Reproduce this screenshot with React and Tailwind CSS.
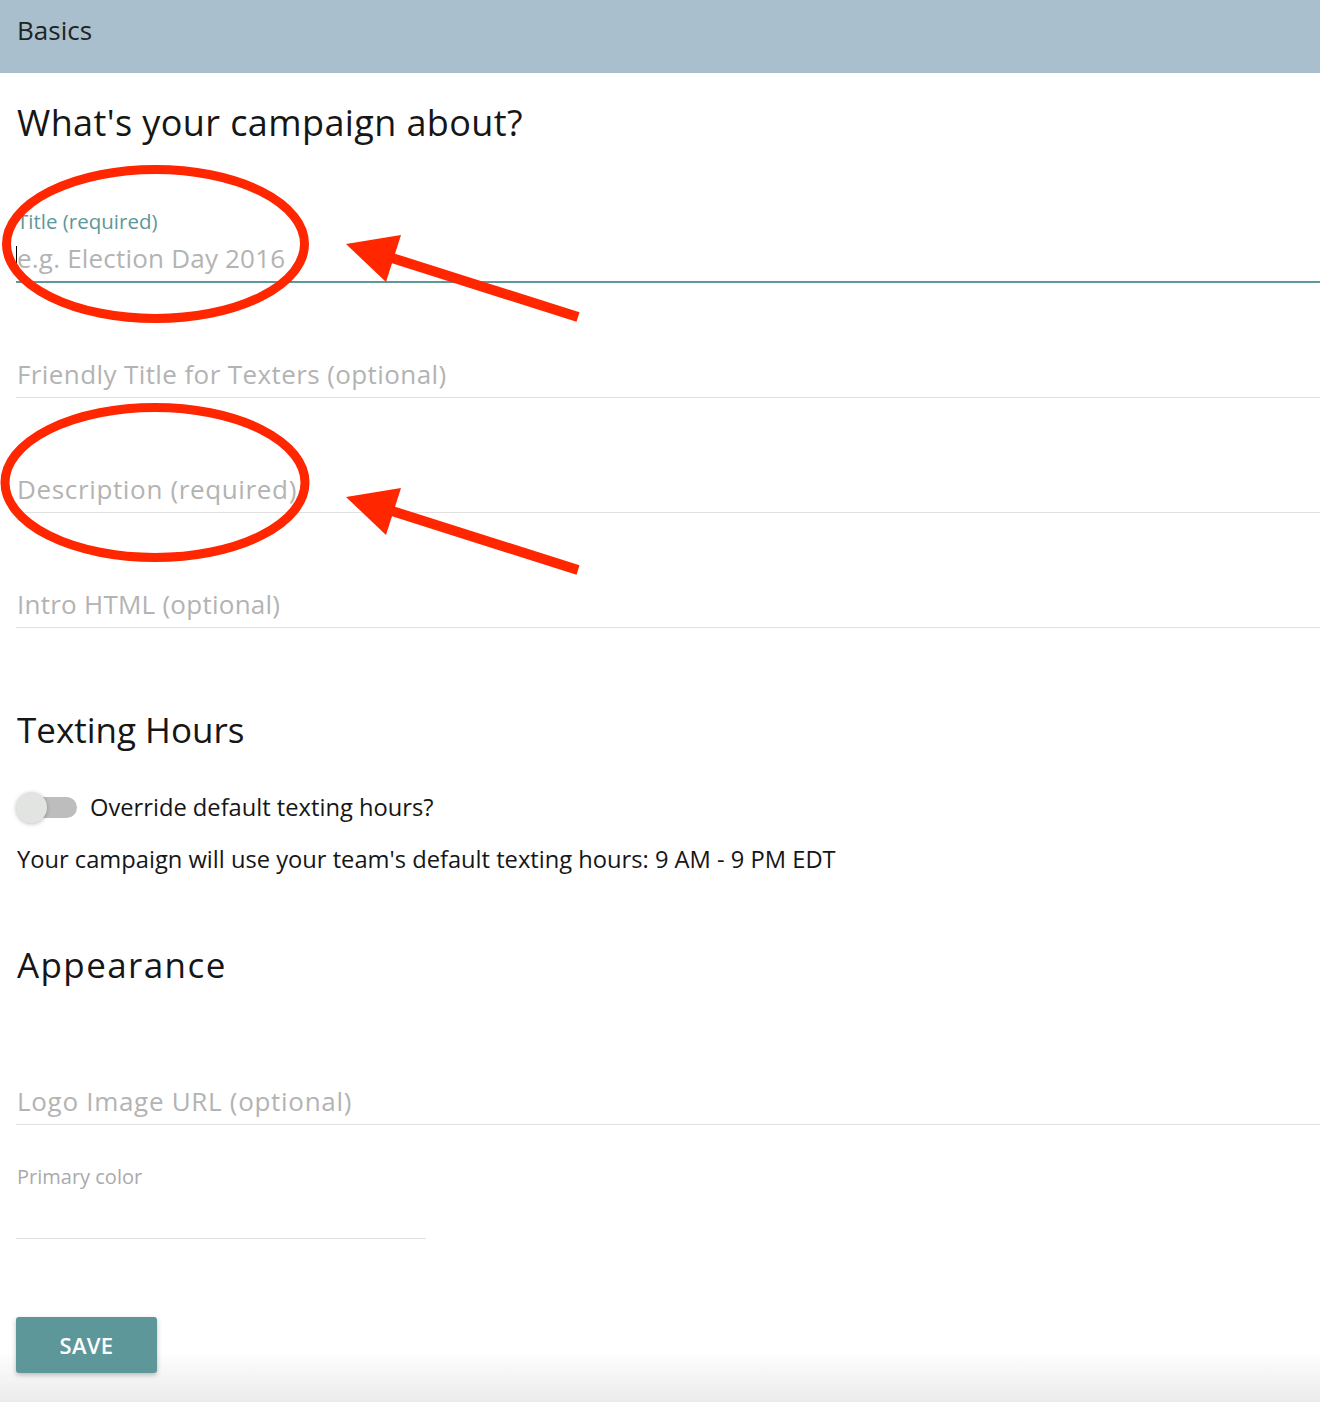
export default function App() {
  return (
    <div className="relative min-h-[1402px] overflow-hidden bg-[linear-gradient(to_bottom,#ffffff_1350px,#ebebeb_1402px)] font-['Open_Sans',sans-serif] text-[#161616]">
      <div className="h-[73px] bg-[#a9bfcd] px-[17px] pt-[15px] text-[26px] leading-[30px] text-[#222]">Basics</div>
      <div className="pl-4">
        <h1 className="mt-[30px] pl-px text-[36px] leading-[40px] tracking-[0.4px]">What's your campaign about?</h1>

        <div className="mt-[68px] border-b-2 border-[#5e9799] pb-[8px]">
          <div className="pl-px text-[20.5px] leading-[20px] text-[#5e9799]">Title (required)</div>
          <div className="mt-[12px] flex h-[30px] items-center">
            <span className="h-[25px] w-px bg-black"></span>
            <span className="text-[26px] leading-[30px] tracking-[0.2px] text-[#b3b3b3]">e.g. Election Day 2016</span>
          </div>
        </div>

        <div className="flex h-[115px] items-end border-b border-[#e0e0e0] pb-[8px]">
          <span className="pl-px text-[26px] leading-[30px] tracking-[0.4px] text-[#b3b3b3]">Friendly Title for Texters (optional)</span>
        </div>
        <div className="flex h-[115px] items-end border-b border-[#e0e0e0] pb-[8px]">
          <span className="pl-px text-[26px] leading-[30px] tracking-[0.65px] text-[#b3b3b3]">Description (required)</span>
        </div>
        <div className="flex h-[115px] items-end border-b border-[#e0e0e0] pb-[8px]">
          <span className="pl-px text-[26px] leading-[30px] tracking-[0.25px] text-[#b3b3b3]">Intro HTML (optional)</span>
        </div>

        <h2 className="mt-[82px] pl-px text-[35px] leading-[40px]">Texting Hours</h2>

        <div className="mt-[42px] flex h-[30px] items-center">
          <div className="relative h-[31px] w-[62px]">
            <div className="absolute left-[4px] top-[5px] h-[21px] w-[57px] rounded-full bg-[#bdbdbd]"></div>
            <div className="absolute left-0 top-0 h-[31px] w-[31px] rounded-full bg-[#e2e4e2] shadow-[0_1px_4px_rgba(0,0,0,0.25)]"></div>
          </div>
          <span className="ml-[12px] text-[23.7px] leading-[30px]">Override default texting hours?</span>
        </div>

        <p className="mt-[22px] pl-px text-[23.7px] leading-[30px]">Your campaign will use your team's default texting hours: 9 AM - 9 PM EDT</p>

        <h2 className="mt-[71px] pl-px text-[35px] leading-[40px] tracking-[1.4px]">Appearance</h2>

        <div className="mt-[25px] flex h-[115px] items-end border-b border-[#e0e0e0] pb-[8px]">
          <span className="pl-px text-[26px] leading-[30px] tracking-[0.7px] text-[#b3b3b3]">Logo Image URL (optional)</span>
        </div>

        <div className="mt-[42px] w-[410px] border-b border-[#e0e0e0] pb-[51px]">
          <div className="pl-px text-[20px] leading-[20px] text-[#aaaaaa]">Primary color</div>
        </div>

        <button className="mt-[78px] flex h-[56px] w-[141px] items-center justify-center rounded-[3px] bg-[#5e9799] text-[22px] font-semibold tracking-[0.3px] text-white shadow-[0_2px_5px_rgba(0,0,0,0.25)]">
          SAVE
        </button>
      </div>

      <svg className="pointer-events-none absolute left-0 top-0" width="1320" height="1402" viewBox="0 0 1320 1402">
        <ellipse cx="155.5" cy="244" rx="149" ry="74.5" fill="none" stroke="#ff2600" strokeWidth="9" />
        <ellipse cx="155" cy="482.5" rx="150" ry="75" fill="none" stroke="#ff2600" strokeWidth="9" />
        <line x1="578" y1="317" x2="392" y2="258" stroke="#ff2600" strokeWidth="10" />
        <polygon points="346,244 401,235 386,282" fill="#ff2600" />
        <line x1="578" y1="570" x2="392" y2="511" stroke="#ff2600" strokeWidth="10" />
        <polygon points="346,497 401,488 386,535" fill="#ff2600" />
      </svg>
    </div>
  );
}
